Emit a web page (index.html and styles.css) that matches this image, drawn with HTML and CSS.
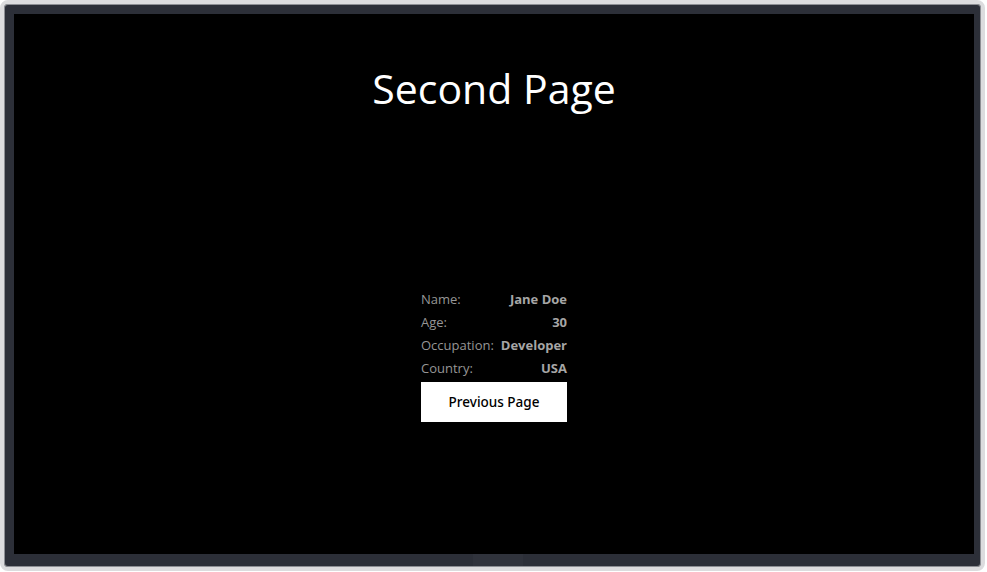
FILE: index.html
```html
<!DOCTYPE html>
<html lang="en">
<head>
<meta charset="utf-8">
<title>Second Page</title>
<link rel="stylesheet" href="styles.css">
</head>
<body>
  <div class="tv">
    <div class="screen">
      <header class="title-area">
        <h1 class="title">Second Page</h1>
      </header>
      <main class="content">
        <div class="card">
          <table class="info">
            <tr><td class="label">Name:</td><td class="value">Jane Doe</td></tr>
            <tr><td class="label">Age:</td><td class="value">30</td></tr>
            <tr><td class="label">Occupation:</td><td class="value">Developer</td></tr>
            <tr><td class="label">Country:</td><td class="value">USA</td></tr>
          </table>
          <button class="btn">Previous Page</button>
        </div>
      </main>
    </div>
    <div class="logo-strip"></div>
  </div>
</body>
</html>
```

FILE: styles.css
```css
html, body {
  margin: 0;
  padding: 0;
  background: #ffffff;
}

body {
  width: 987px;
  height: 572px;
  overflow: hidden;
  font-family: "Open Sans", "Noto Sans", sans-serif;
}

.tv {
  position: relative;
  box-sizing: border-box;
  width: 985px;
  height: 571px;
  border: 4px solid #dcdcde;
  border-radius: 8px;
  box-shadow: inset 0 0 0 1px #8d8f94;
  background: #2c2f38;
  padding: 10px 7px 13px 10px;
}

.screen {
  width: 960px;
  height: 540px;
  background: #000000;
  display: flex;
  flex-direction: column;
}

.title-area {
  height: 142px;
  display: flex;
  justify-content: center;
}

.title {
  margin: 48px 0 0;
  font-size: 41px;
  font-weight: 400;
  color: #ffffff;
  line-height: 52px;
}

.content {
  flex: 1;
  display: flex;
  align-items: center;
  justify-content: center;
}

.card {
  display: flex;
  flex-direction: column;
  width: 146px;
}

.info {
  border-collapse: collapse;
  width: 100%;
  font-size: 13px;
  line-height: 23px;
}

.info td {
  padding: 0;
  white-space: nowrap;
}

.label {
  color: #969696;
  text-align: left;
}

.value {
  color: #a6a6a6;
  font-weight: 700;
  text-align: right;
}

.btn {
  margin-top: 2px;
  height: 40px;
  border: 0;
  background: #ffffff;
  color: #000000;
  font-family: "Noto Sans", "Open Sans", sans-serif;
  font-size: 13.5px;
  font-weight: 500;
  padding: 0;
  cursor: pointer;
}

.logo-strip {
  position: absolute;
  left: 469px;
  bottom: 1px;
  width: 50px;
  height: 12px;
  background: #30333c;
}
```
